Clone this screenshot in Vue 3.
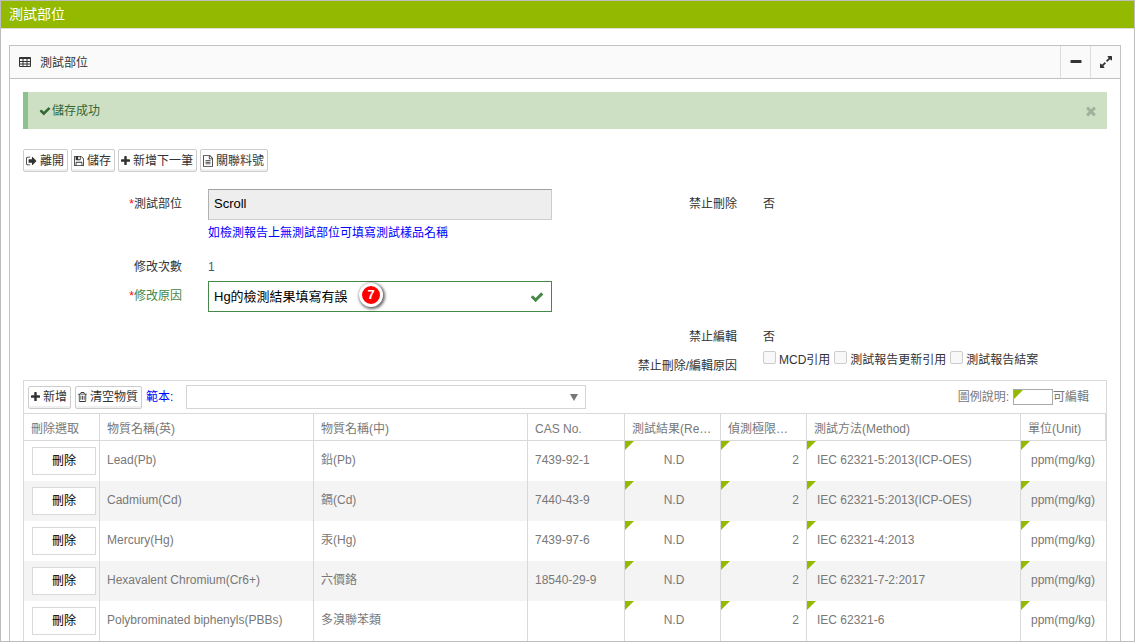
<script setup>
import { ref } from 'vue'

const icons = {
  table: {
    box: '0 0 24 22',
    d: 'M2 0h20q2 0 2 2v16q0 2-2 2H2q-2 0-2-2V2q0-2 2-2zM2 4v4h5V4zM9 4v4h6V4zM17 4v4h5V4zM2 10v3h5v-3zM9 10v3h6v-3zM17 10v3h5v-3zM2 15v3h5v-3zM9 15v3h6v-3zM17 15v3h5v-3z'
  },
  check: {
    box: '0 0 1792 1792',
    d: 'M1671 566q0 40-28 68l-724 724-136 136q-28 28-68 28t-68-28l-136-136-362-362q-28-28-28-68t28-68l136-136q28-28 68-28t68 28l294 295 656-657q28-28 68-28t68 28l136 136q28 28 28 68z'
  },
  times: {
    box: '0 0 1792 1792',
    d: 'M1490 1322q0 40-28 68l-136 136q-28 28-68 28t-68-28l-294-294-294 294q-28 28-68 28t-68-28l-136-136q-28-28-28-68t28-68l294-294-294-294q-28-28-28-68t28-68l136-136q28-28 68-28t68 28l294 294 294-294q28-28 68-28t68 28l136 136q28 28 28 68t-28 68l-294 294 294 294q28 28 28 68z'
  },
  plus: {
    box: '192 0 1408 1792',
    d: 'M1600 736v192q0 40-28 68t-68 28h-416v416q0 40-28 68t-68 28h-192q-40 0-68-28t-28-68v-416h-416q-40 0-68-28t-28-68v-192q0-40 28-68t68-28h416v-416q0-40 28-68t68-28h192q40 0 68 28t28 68v416h416q40 0 68 28t28 68z'
  },
  minus: {
    box: '0 0 1792 1792',
    d: 'M1600 736v192q0 40-28 68t-68 28h-1216q-40 0-68-28t-28-68v-192q0-40 28-68t68-28h1216q40 0 68 28t28 68z'
  },
  expand: {
    box: '128 128 1536 1536',
    d: 'M883 1056q0 13-10 23l-332 332 144 144q19 19 19 45t-19 45-45 19h-448q-26 0-45-19t-19-45v-448q0-26 19-45t45-19 45 19l144 144 332-332q10-10 23-10t23 10l114 114q10 10 10 23zm781-864v448q0 26-19 45t-45 19-45-19l-144-144-332 332q-10 10-23 10t-23-10l-114-114q-10-10-10-23t10-23l332-332-144-144q-19-19-19-45t19-45 45-19h448q26 0 45 19t19 45z'
  },
  exit: {
    box: '64 0 1664 1792',
    d: 'M704 1440q0 4 1 20t.5 26.5-3 23.5-10 19.5-20.5 6.5h-320q-119 0-203.5-84.5t-84.5-203.5v-704q0-119 84.5-203.5t203.5-84.5h320q13 0 22.5 9.5t9.5 22.5q0 4 1 20t.5 26.5-3 23.5-10 19.5-20.5 6.5h-320q-66 0-113 47t-47 113v704q0 66 47 113t113 47h312l11.5 1 11.5 3 8 5.5 7 9 2 13.5zm928-544q0 26-19 45l-544 544q-19 19-45 19t-45-19-19-45v-288h-448q-26 0-45-19t-19-45v-384q0-26 19-45t45-19h448v-288q0-26 19-45t45-19 45 19l544 544q19 19 19 45z'
  },
  save: {
    box: '128 0 1536 1792',
    d: 'M512 1536h768v-384h-768v384zm896 0h128v-896q0-14-10-38.5t-20-34.5l-281-281q-10-10-34-20t-39-10v416q0 40-28 68t-68 28h-576q-40 0-68-28t-28-68v-416h-128v1280h128v-416q0-40 28-68t68-28h832q40 0 68 28t28 68v416zm-384-928v-320q0-13-9.5-22.5t-22.5-9.5h-192q-13 0-22.5 9.5t-9.5 22.5v320q0 13 9.5 22.5t22.5 9.5h192q13 0 22.5-9.5t9.5-22.5zm640 32v928q0 40-28 68t-68 28h-1344q-40 0-68-28t-28-68v-1344q0-40 28-68t68-28h928q40 0 88 20t76 48l280 280q28 28 48 76t20 88z'
  },
  file: {
    box: '128 0 1536 1792',
    d: 'M1596 380q28 28 48 76t20 88v1152q0 40-28 68t-68 28h-1344q-40 0-68-28t-28-68v-1600q0-40 28-68t68-28h896q40 0 88 20t76 48zm-444-244v376h376q-10-29-22-41l-313-313q-12-12-41-22zm384 1528v-1024h-416q-40 0-68-28t-28-68v-416h-768v1536h1280zM512 768h768v128h-768zM512 1024h768v128h-768zM512 1280h768v128h-768z'
  },
  trash: {
    box: '192 0 1408 1792',
    d: 'M576 704h128v640h-128zM832 704h128v640h-128zM1088 704h128v640h-128zM1344 1460v-948h-896v948q0 22 7 40.5t14.5 27 10.5 8.5h832q3 0 10.5-8.5t14.5-27 7-40.5zm-672-1076h448l-48-117q-7-9-17-11h-317q-10 2-17 11zm928 32v64q0 14-9 23t-23 9h-96v948q0 83-47 143.5t-113 60.5h-832q-66 0-113-58.5t-47-141.5v-952h-96q-14 0-23-9t-9-23v-64q0-14 9-23t23-9h309l70-167q15-37 54-63t79-26h320q40 0 79 26t54 63l70 167h309q14 0 23 9t9 23z'
  }
}

const actions = [
  { icon: 'exit', label: '離開' },
  { icon: 'save', label: '儲存' },
  { icon: 'plus', label: '新增下一筆' },
  { icon: 'file', label: '關聯料號' }
]

const part = ref('Scroll')
const reason = ref('Hg的檢測結果填寫有誤')
const lockReasons = ['MCD引用', '測試報告更新引用', '測試報告結案']

const columns = [
  { key: 'pick', label: '刪除選取' },
  { key: 'en', label: '物質名稱(英)' },
  { key: 'zh', label: '物質名稱(中)' },
  { key: 'cas', label: 'CAS No.' },
  { key: 'result', label: '測試結果(Re…' },
  { key: 'limit', label: '偵測極限…' },
  { key: 'method', label: '測試方法(Method)' },
  { key: 'unit', label: '單位(Unit)' }
]

const rows = [
  { en: 'Lead(Pb)', zh: '鉛(Pb)', cas: '7439-92-1', method: 'IEC 62321-5:2013(ICP-OES)' },
  { en: 'Cadmium(Cd)', zh: '鎘(Cd)', cas: '7440-43-9', method: 'IEC 62321-5:2013(ICP-OES)' },
  { en: 'Mercury(Hg)', zh: '汞(Hg)', cas: '7439-97-6', method: 'IEC 62321-4:2013' },
  { en: 'Hexavalent Chromium(Cr6+)', zh: '六價鉻', cas: '18540-29-9', method: 'IEC 62321-7-2:2017' },
  { en: 'Polybrominated biphenyls(PBBs)', zh: '多溴聯苯類', cas: '', method: 'IEC 62321-6' }
]
</script>

<template>
  <div class="page">
    <header class="titlebar"><h1>測試部位</h1></header>

    <section class="panel">
      <div class="panel-head">
        <svg class="icon icon-table" :viewBox="icons.table.box"><path fill-rule="evenodd" :d="icons.table.d" /></svg>
        <h2>測試部位</h2>
        <button class="tool" type="button" aria-label="收合">
          <svg class="icon icon-lg" :viewBox="icons.minus.box"><path :d="icons.minus.d" /></svg>
        </button>
        <button class="tool" type="button" aria-label="全螢幕">
          <svg class="icon" :viewBox="icons.expand.box"><path :d="icons.expand.d" /></svg>
        </button>
      </div>

      <div class="alert" role="status">
        <svg class="icon" :viewBox="icons.check.box"><path :d="icons.check.d" /></svg>
        <span class="alert-text">儲存成功</span>
        <button class="close" type="button" aria-label="關閉">
          <svg class="icon icon-lg" :viewBox="icons.times.box"><path :d="icons.times.d" /></svg>
        </button>
      </div>

      <div class="actions">
        <button v-for="a in actions" :key="a.label" class="btn" type="button">
          <svg class="icon" :class="'w-' + a.icon" :viewBox="icons[a.icon].box"><path :d="icons[a.icon].d" /></svg>
          <span>{{ a.label }}</span>
        </button>
      </div>

      <form class="form" @submit.prevent>
        <div class="row row-part">
          <label class="label" for="part"><i>*</i>測試部位</label>
          <div class="field">
            <input id="part" v-model="part" class="text readonly" type="text" readonly />
            <p class="hint">如檢測報告上無測試部位可填寫測試樣品名稱</p>
          </div>
          <span class="label">禁止刪除</span>
          <div class="field value">否</div>
        </div>
        <div class="row row-short">
          <span class="label">修改次數</span>
          <div class="field value count">1</div>
        </div>
        <div class="row row-reason">
          <label class="label ok" for="reason"><i>*</i>修改原因</label>
          <div class="field">
            <div class="valid-box">
              <input id="reason" v-model="reason" class="text valid" type="text" />
              <svg class="icon icon-lg valid-mark" :viewBox="icons.check.box"><path :d="icons.check.d" /></svg>
              <span class="step">7</span>
            </div>
          </div>
        </div>
        <div class="row row-short">
          <span class="label right">禁止編輯</span>
          <div class="field value">否</div>
        </div>
        <div class="row row-short">
          <span class="label right">禁止刪除/編輯原因</span>
          <div class="field checks">
            <label v-for="r in lockReasons" :key="r" class="check">
              <input type="checkbox" disabled /><span>{{ r }}</span>
            </label>
          </div>
        </div>
      </form>

      <div class="grid">
        <div class="grid-bar">
          <button class="btn" type="button">
            <svg class="icon w-plus" :viewBox="icons.plus.box"><path :d="icons.plus.d" /></svg>
            <span>新增</span>
          </button>
          <button class="btn" type="button">
            <svg class="icon w-trash" :viewBox="icons.trash.box"><path :d="icons.trash.d" /></svg>
            <span>清空物質</span>
          </button>
          <label class="template-label" for="template">範本:</label>
          <div class="select">
            <select id="template"><option value=""></option></select>
            <svg class="arrow" viewBox="0 0 8 7"><path d="M0 0h8L4 7z" /></svg>
          </div>
          <div class="legend">圖例說明:<span class="swatch"></span>可編輯</div>
        </div>

        <table>
          <colgroup>
            <col v-for="c in columns" :key="c.key" :class="'c-' + c.key" />
          </colgroup>
          <thead>
            <tr><th v-for="c in columns" :key="c.key" scope="col">{{ c.label }}</th></tr>
          </thead>
          <tbody>
            <tr v-for="r in rows" :key="r.en">
              <td class="pick"><button class="delete" type="button">刪除</button></td>
              <td>{{ r.en }}</td>
              <td>{{ r.zh }}</td>
              <td>{{ r.cas }}</td>
              <td class="edit center">N.D</td>
              <td class="edit number">2</td>
              <td class="edit">{{ r.method }}</td>
              <td class="edit">ppm(mg/kg)</td>
            </tr>
          </tbody>
        </table>
      </div>
    </section>
  </div>
</template>

<style>
body {
  margin: 0;
  background: #fff;
}
</style>

<style scoped>
* {
  box-sizing: border-box;
}

.page,
.page button,
.page input,
.page select {
  font-family: "Liberation Sans", "Noto Sans CJK TC", sans-serif;
  font-size: 12px;
  line-height: 18px;
}

.page {
  height: 100vh;
  overflow: hidden;
  border: 1px solid #bdbdbd;
  color: #333;
}

h1,
h2,
p {
  margin: 0;
  font-weight: normal;
}

.icon {
  display: block;
  flex: none;
  width: 12px;
  height: 12px;
  fill: currentColor;
}

.icon-table { height: 11px; }
.icon-lg { width: 14px; height: 14px; }
.w-exit { width: 11px; }
.w-save,
.w-file { width: 10px; }
.w-plus,
.w-trash { width: 9px; }

.titlebar {
  height: 28px;
  padding: 0 8px;
  background: #93b900;
  border-bottom: 1px solid #ddd;
  color: #fff;
}

.titlebar h1 {
  font-size: 14px;
  line-height: 26px;
}

.panel {
  margin: 16px 13px 0 8px;
  border: 1px solid #c3c3c3;
}

.panel-head {
  display: flex;
  align-items: center;
  height: 33px;
  padding-left: 9px;
  background: #fafafa;
  border-bottom: 1px solid #c3c3c3;
}

.panel-head h2 {
  flex: 1;
  margin-left: 9px;
  padding-top: 2px;
  font-size: 12px;
}

.tool {
  display: flex;
  align-items: center;
  justify-content: center;
  width: 30px;
  height: 100%;
  padding: 0;
  background: none;
  border: 0;
  border-left: 1px solid #ddd;
  color: #333;
}

.alert {
  display: flex;
  align-items: center;
  height: 37px;
  margin: 13px 13px 20px;
  padding: 0 9px 0 11px;
  background: #cde0c4;
  border-left: 5px solid #8ac38b;
  color: #356635;
}

.alert-text {
  flex: 1;
  margin-left: 1px;
}

.close {
  padding: 0;
  background: none;
  border: 0;
  color: #9fb29b;
}

.actions {
  display: flex;
  gap: 3px;
  margin: 0 13px 17px;
}

.btn {
  display: flex;
  align-items: center;
  gap: 3px;
  height: 23px;
  padding: 0 3px 0 2px;
  background: #fff;
  border: 1px solid #ccc;
  border-radius: 2px;
  box-shadow: inset 0 -2px 0 #f0f0f0;
  color: #333;
  white-space: nowrap;
}

.row {
  display: grid;
  grid-template-columns: 1fr 2fr 1fr 2fr;
  align-items: start;
}

.row-part { min-height: 63px; }
.row-short { min-height: 29px; }
.row-reason { min-height: 41px; }

.label {
  padding: 6px 13px 0 0;
  text-align: right;
}

.label i {
  color: #f00;
  font-style: normal;
}

.label.ok { color: #468847; }
.label.right { grid-column: 3; }

.field {
  padding: 0 13px;
}

.value { padding-top: 6px; }
.count { color: #3a6272; }

.page .text {
  display: block;
  width: 100%;
  height: 31px;
  padding: 0 5px 2px;
  border: 1px solid #ccc;
  border-radius: 0;
  outline: 0;
  background: #fff;
  color: #000;
  font-size: 13px;
}

.page .readonly {
  background: #eee;
  border-top-color: #a0a0a0;
  border-left-color: #b0b0b0;
}

.page .valid { border-color: #468847; }

.hint {
  padding-top: 4px;
  color: #00f;
}

.valid-box { position: relative; }

.valid-mark {
  position: absolute;
  top: 9px;
  right: 8px;
  color: #468847;
}

.step {
  position: absolute;
  top: 2px;
  left: 151px;
  width: 24px;
  height: 24px;
  border: 3px solid #fff;
  border-radius: 50%;
  background: #f00;
  box-shadow: 1px 1px 3px 1px rgba(0, 0, 0, 0.6);
  color: #fff;
  font-size: 13px;
  font-weight: bold;
  line-height: 18px;
  text-align: center;
}

.checks {
  display: flex;
  gap: 4px;
  white-space: nowrap;
}

.check {
  display: flex;
  gap: 3px;
}

.check input {
  appearance: none;
  width: 13px;
  height: 13px;
  margin: 0;
  background: #f8f8f8;
  border: 1px solid #ccc;
  border-radius: 2px;
}

.grid {
  margin: 0 13px;
  border: 1px solid #d9d9d9;
  color: #787878;
}

.grid-bar {
  display: flex;
  align-items: center;
  gap: 4px;
  height: 33px;
  padding: 0 17px 0 4px;
  border-bottom: 1px solid #d9d9d9;
}

.template-label {
  width: 36px;
  color: #00f;
}

.select {
  position: relative;
  flex: 0 1 400px;
}

.select select {
  display: block;
  appearance: none;
  width: 100%;
  height: 24px;
  background: #fff;
  border: 1px solid #d5d5d5;
  border-radius: 0;
}

.arrow {
  position: absolute;
  top: 9px;
  right: 8px;
  width: 8px;
  height: 7px;
  fill: #777;
  pointer-events: none;
}

.legend {
  display: flex;
  align-items: center;
  margin-left: auto;
}

.swatch {
  position: relative;
  width: 40px;
  height: 16px;
  margin-left: 4px;
  border: 1px solid #aaa;
}

.swatch::before,
.edit::before {
  content: "";
  position: absolute;
  top: 0;
  left: 0;
  width: 9px;
  height: 9px;
  background: #93b900;
  clip-path: polygon(0 0, 100% 0, 0 100%);
}

table {
  width: 100%;
  table-layout: fixed;
  border-spacing: 0;
}

.c-pick { width: 76px; }
.c-cas { width: 97px; }
.c-result { width: 96px; }
.c-limit { width: 86px; }
.c-unit { width: 85px; }

th,
td {
  padding: 0 7px;
  border-right: 1px solid #d9d9d9;
  font-weight: normal;
  text-align: left;
  white-space: nowrap;
}

th {
  height: 27px;
  padding: 3px 6px 0 7px;
  overflow: hidden;
  border-bottom: 1px solid #d9d9d9;
}

td {
  height: 40px;
  padding-bottom: 2px;
}

td:last-child { border-right: 0; }

tbody tr:nth-child(even) { background: #f4f4f4; }

.pick { padding: 0 3px 0 8px; }

.edit {
  position: relative;
  padding-left: 10px;
}

.center { text-align: center; }
.number { text-align: right; }

.delete {
  display: block;
  width: 100%;
  height: 28px;
  padding: 0;
  background: #fff;
  border: 1px solid #d9d9d9;
  color: #000;
}
</style>
